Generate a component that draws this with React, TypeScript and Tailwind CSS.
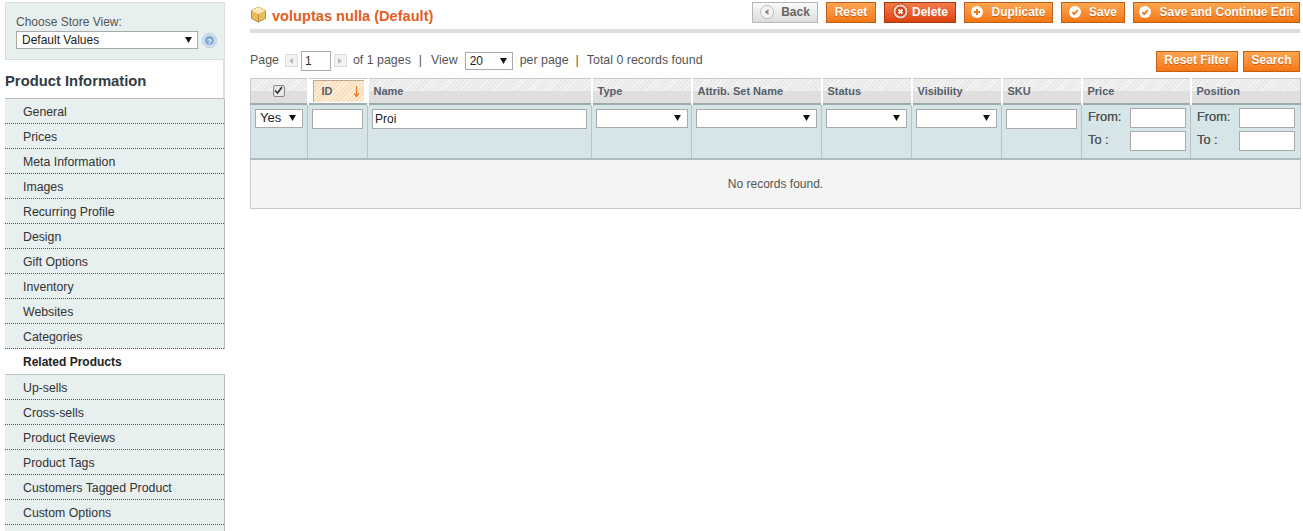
import React from "react";

const hatch =
  "bg-[repeating-linear-gradient(135deg,#f6f6f6_0px,#f6f6f6_1px,#e9e9e9_1px,#e9e9e9_3px)]";
const thBase = "p-0 h-[25px] border-r-2 border-white last:border-r-0 text-left align-middle";
const orange =
  "h-[21px] flex items-center justify-center gap-2 pb-[2px] border border-[#c2601a] bg-gradient-to-b from-[#fca64f] to-[#f5760f] text-white font-bold text-[12px] [text-shadow:0_1px_0_#c9600f]";

function Select({ value, w, arrowRight = 6 }: { value?: string; w: string; arrowRight?: number }) {
  return (
    <div className={`${w} h-[19px] bg-white border border-[#aaa] flex items-center justify-between pl-[4px] text-[13px] text-[#222]`} style={{ paddingRight: arrowRight }}>
      <span>{value ?? ""}</span>
      <svg width="7" height="6" viewBox="0 0 8 7" className="shrink-0">
        <polygon points="0,0 8,0 4,7" fill="#111" />
      </svg>
    </div>
  );
}

function TextInput({ w, value }: { w: string; value?: string }) {
  return (
    <input
      readOnly
      defaultValue={value}
      className={`${w} h-[20px] block bg-white border border-[#aaa] px-[2px] text-[12px] text-[#222] outline-none`}
    />
  );
}

function Header({ label }: { label: string }) {
  return (
    <th className={`${thBase} relative`}>
      <div className="absolute inset-0 flex flex-col">
        <div className={`h-1/2 ${hatch}`} />
        <div className="h-1/2 bg-[#dfdfdf]" />
      </div>
      <span className="relative pl-[5px] text-[11px] font-bold text-[#555e6a]">{label}</span>
    </th>
  );
}

function RangeCell({ inputGap }: { inputGap: string }) {
  return (
    <td className="border-r border-[#b6c4c6] last:border-r-0 pl-[6px] pr-[4px] pt-[3px] align-top">
      <div className="flex items-center h-[20px] text-[12.8px] text-[#555] [text-shadow:0_0_0_#555]">
        <span className={`${inputGap} pb-[2px]`}>From:</span>
        <TextInput w="w-[56px]" />
      </div>
      <div className="flex items-center h-[20px] mt-[3px] text-[12.8px] text-[#555] [text-shadow:0_0_0_#555]">
        <span className={`${inputGap} pb-[2px]`}>To :</span>
        <TextInput w="w-[56px]" />
      </div>
    </td>
  );
}

const FilterCell = ({ children }: { children?: React.ReactNode }) => (
  <td className="border-r border-[#b6c4c6] px-[4px] pt-[4px] align-top">{children}</td>
);

const items1 = ["General", "Prices", "Meta Information", "Images", "Recurring Profile", "Design", "Gift Options", "Inventory", "Websites", "Categories"];
const items2 = ["Up-sells", "Cross-sells", "Product Reviews", "Product Tags", "Customers Tagged Product", "Custom Options"];

function NavItem({ label }: { label: string }) {
  return (
    <div className="h-[25px] pl-[18px] flex items-center bg-[#e7efef] border-b border-dotted border-[#555] text-[12.3px] text-[#333]">
      <span className="pt-[3px]">{label}</span>
    </div>
  );
}

function ActionIcon({ kind }: { kind: "plus" | "check" | "x" | "back" }) {
  if (kind === "back") {
    return (
      <svg width="14" height="14" viewBox="0 0 14 14">
        <circle cx="7" cy="7" r="6.5" fill="#f4f4f4" stroke="#bcbcbc" />
        <polygon points="8.5,4 8.5,10 4.5,7" fill="#888" />
      </svg>
    );
  }
  if (kind === "x") {
    return (
      <svg width="17" height="17" viewBox="0 0 17 17">
        <circle cx="8.5" cy="8.5" r="7.5" fill="#f1d6cc" stroke="#c9401c" strokeWidth="1" />
        <circle cx="8.5" cy="8.5" r="5" fill="#d5431a" />
        <path d="M6.5 6.5l4 4M10.5 6.5l-4 4" stroke="#fff" strokeWidth="1.8" />
      </svg>
    );
  }
  return (
    <svg width="12" height="12" viewBox="0 0 12 12">
      <circle cx="6" cy="6" r="6" fill="#fff" />
      {kind === "plus" ? (
        <path d="M6 3v6M3 6h6" stroke="#ee7a1a" strokeWidth="2" />
      ) : (
        <path d="M3.2 6.2l2 2 3.6-4" stroke="#ee7a1a" strokeWidth="1.8" fill="none" />
      )}
    </svg>
  );
}

export default function App() {
  return (
    <div className="w-[1303px] h-[531px] overflow-hidden bg-white flex font-['Liberation_Sans',Arial,sans-serif] text-[12px] text-[#444]">
      {/* Sidebar */}
      <aside className="w-[220px] ml-[5px] mr-[25px] shrink-0 pt-[2px]">
        <div className="h-[58px] bg-[#e7efef] border border-[#d6dedf] pl-[10px] pt-[12px]">
          <div className="text-[12px] leading-[14px] text-[#555]">Choose Store View:</div>
          <div className="flex items-center gap-[4px] mt-[2px]">
            <Select value="Default Values" w="w-[182px] !h-[18px] !text-[12px] !pl-[5px]" arrowRight={5} />
            <svg width="15" height="15" viewBox="0 0 15 15">
              <circle cx="7.5" cy="7.5" r="7" fill="#cfe0ee" stroke="#b4cbde" />
              <circle cx="7.5" cy="7.5" r="4.5" fill="#7ea8d2" />
              <text x="7.5" y="10.5" textAnchor="middle" fontSize="8" fontWeight="700" fill="#fff">?</text>
            </svg>
          </div>
        </div>
        <div className="h-[39px] pt-[4px] border-r-2 border-r-[#ddd] border-b border-b-[#bbb] flex items-center text-[14.8px] font-bold text-[#333c44]">
          Product Information
        </div>
        <div className="border-r border-[#bbb]">
          {items1.map((l) => (
            <NavItem key={l} label={l} />
          ))}
        </div>
        <div className="h-[26px] pl-[18px] flex items-center bg-white border-b border-[#bcc5c6] text-[12px] font-bold text-[#222]">
          Related Products
        </div>
        <div className="border-r border-[#bbb]">
          {items2.map((l) => (
            <NavItem key={l} label={l} />
          ))}
          <div className="h-[7px] bg-[#e7efef]" />
        </div>
      </aside>

      {/* Main */}
      <main className="w-[1050px] shrink-0 pt-[2px]">
        <div className="h-[27px] flex justify-between border-b-[4px] border-[#dedede] box-content pb-0">
          <div className="flex items-start gap-[5px] pt-[4px]">
            <svg width="17" height="17" viewBox="0 0 17 17">
              <polygon points="8.5,1 15.5,4.5 15.5,12.5 8.5,16 1.5,12.5 1.5,4.5" fill="#e9bd5c" stroke="#b98f3a" />
              <polygon points="8.5,1 15.5,4.5 8.5,8 1.5,4.5" fill="#fbeab8" />
              <path d="M8.5 8v8" stroke="#b98f3a" />
            </svg>
            <h1 className="text-[14.6px] leading-[20px] font-bold text-[#e0601f]">voluptas nulla (Default)</h1>
          </div>
          <div className="flex gap-[8px] items-start">
            <button className="w-[66px] h-[21px] flex items-center justify-center gap-[7px] pb-[1px] border border-[#b6b6b6] bg-gradient-to-b from-[#fafafa] to-[#dcdcdc] text-[#666] font-bold text-[12px]">
              <ActionIcon kind="back" /> Back
            </button>
            <button className={`${orange} w-[50px]`}>Reset</button>
            <button className="w-[72px] h-[21px] flex items-center justify-center gap-[3px] pb-[2px] border border-[#a8380f] bg-gradient-to-b from-[#f57a47] to-[#dc4208] text-white font-bold text-[12px]">
              <ActionIcon kind="x" /> Delete
            </button>
            <button className={`${orange} w-[89px]`}>
              <ActionIcon kind="plus" /> Duplicate
            </button>
            <button className={`${orange} w-[64px]`}>
              <ActionIcon kind="check" /> Save
            </button>
            <button className={`${orange} w-[167px]`}>
              <ActionIcon kind="check" /> Save and Continue Edit
            </button>
          </div>
        </div>

        <div className="h-[21px] mt-[17px] flex items-center justify-between">
          <div className="flex items-center text-[12.4px] text-[#555]">
            <span>Page</span>
            <span className="ml-[6px] w-[13px] h-[13px] border border-[#ddd] bg-[#f2f2f2] flex items-center justify-center">
              <svg width="4" height="6" viewBox="0 0 4 6"><polygon points="4,0 4,6 0,3" fill="#bbb" /></svg>
            </span>
            <input readOnly defaultValue="1" className="ml-[3px] w-[30px] h-[20px] border border-[#aaa] px-[3px] text-[12px] text-[#333] outline-none" />
            <span className="ml-[3px] w-[13px] h-[13px] border border-[#ddd] bg-[#f2f2f2] flex items-center justify-center">
              <svg width="4" height="6" viewBox="0 0 4 6"><polygon points="0,0 0,6 4,3" fill="#bbb" /></svg>
            </span>
            <span className="ml-[6px]">of 1 pages</span>
            <span className="ml-[8px]">|</span>
            <span className="ml-[9px]">View</span>
            <span className="ml-[7px]"><Select value="20" w="w-[48px] !h-[18px] !text-[12px]" arrowRight={5} /></span>
            <span className="ml-[7px]">per page</span>
            <span className="ml-[7px]">|</span>
            <span className="ml-[8px]">Total 0 records found</span>
          </div>
          <div className="flex gap-[5px] mt-[1px]">
            <button className={`${orange} w-[82px]`}>Reset Filter</button>
            <button className={`${orange} w-[57px]`}>Search</button>
          </div>
        </div>

        <table className="mt-[7px] w-[1050px] table-fixed border-collapse border border-[#c9c9c9]">
          <colgroup>
            <col className="w-[57px]" />
            <col className="w-[60px]" />
            <col className="w-[224px]" />
            <col className="w-[100px]" />
            <col className="w-[130px]" />
            <col className="w-[90px]" />
            <col className="w-[90px]" />
            <col className="w-[80px]" />
            <col className="w-[109px]" />
            <col className="w-[110px]" />
          </colgroup>
          <thead>
            <tr className="border-b-2 border-b-[#9eacae]">
              <th className={`${thBase} relative`}>
                <div className="absolute inset-0 flex flex-col">
                  <div className={`h-1/2 ${hatch}`} />
                  <div className="h-1/2 bg-[#dfdfdf]" />
                </div>
                <div className="relative mx-auto w-[12px] h-[12px] rounded-[2px] border border-[#888] bg-[#e8e8e8] flex items-center justify-center">
                  <svg width="9" height="9" viewBox="0 0 9 9"><path d="M1 4.5l2.5 2.5 4.5-6" stroke="#333" strokeWidth="1.7" fill="none" /></svg>
                </div>
              </th>
              <th className={`${thBase} relative`}>
                <div className="absolute left-[4px] right-[3px] top-[1px] bottom-[1px] border-l border-t border-[#bfa98c] bg-[repeating-linear-gradient(135deg,#fdf1e2_0px,#fdf1e2_1px,#f9dfbd_1px,#f9dfbd_3px)] flex items-center justify-between pl-[8px] pr-[4px]">
                  <span className="text-[11px] font-bold text-[#555e6a]">ID</span>
                  <svg width="7" height="11" viewBox="0 0 7 11"><path d="M3.5 0v10M1 7l2.5 3.5L6 7" stroke="#ea7a1e" strokeWidth="1.2" fill="none" /></svg>
                </div>
              </th>
              {["Name", "Type", "Attrib. Set Name", "Status", "Visibility", "SKU", "Price", "Position"].map((l) => (
                <Header key={l} label={l} />
              ))}
            </tr>
          </thead>
          <tbody>
            <tr className="h-[55px] border-b-2 border-b-[#b0bcbe] bg-[#d6e5e7] bg-[radial-gradient(#c8d9db_0.5px,transparent_0.6px)] bg-[length:2px_2px]">
              <FilterCell><Select value="Yes" w="w-[48px]" /></FilterCell>
              <FilterCell><TextInput w="w-[51px]" /></FilterCell>
              <FilterCell><TextInput w="w-[215px]" value="Proi" /></FilterCell>
              <FilterCell><Select w="w-[92px]" /></FilterCell>
              <FilterCell><Select w="w-[121px]" /></FilterCell>
              <FilterCell><Select w="w-[81px]" /></FilterCell>
              <FilterCell><Select w="w-[81px]" /></FilterCell>
              <FilterCell><TextInput w="w-[71px]" /></FilterCell>
              <RangeCell inputGap="w-[42px]" />
              <RangeCell inputGap="w-[42px]" />
            </tr>
            <tr>
              <td colSpan={10} className="h-[50px] bg-[#f4f4f4] text-center text-[12px] text-[#555]">
                No records found.
              </td>
            </tr>
          </tbody>
        </table>
      </main>
    </div>
  );
}
